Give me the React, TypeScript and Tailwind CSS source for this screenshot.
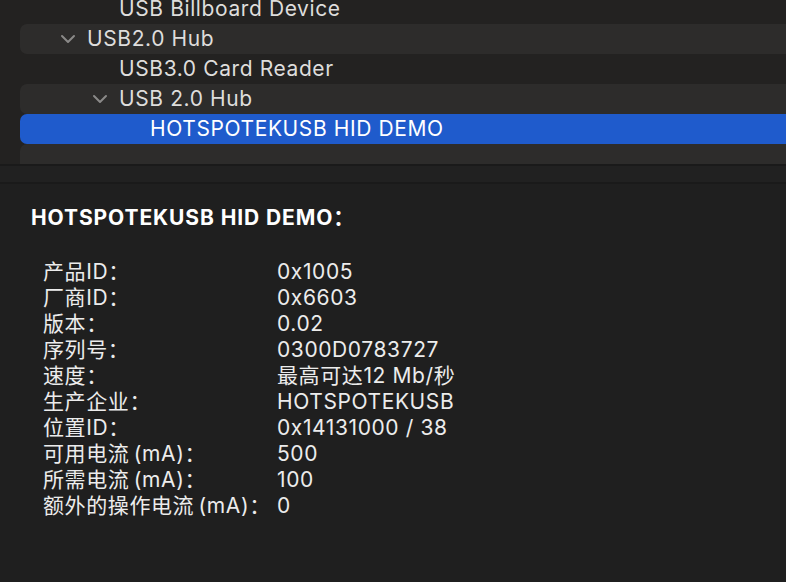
import React from "react";

type TreeRow = {
  label: string;
  pad: string;
  chevron?: boolean;
  shaded?: boolean;
  selected?: boolean;
};

const rows: TreeRow[] = [
  { label: "USB Billboard Device", pad: "pl-[99px]" },
  { label: "USB2.0 Hub", pad: "pl-[40px]", chevron: true, shaded: true },
  { label: "USB3.0 Card Reader", pad: "pl-[99px]" },
  { label: "USB 2.0 Hub", pad: "pl-[72px]", chevron: true, shaded: true },
  { label: "HOTSPOTEKUSB HID DEMO", pad: "pl-[130px]", selected: true },
  { label: "", pad: "pl-[99px]", shaded: true },
];

const details: [string, string][] = [
  ["产品ID：", "0x1005"],
  ["厂商ID：", "0x6603"],
  ["版本：", "0.02"],
  ["序列号：", "0300D0783727"],
  ["速度：", "最高可达12 Mb/秒"],
  ["生产企业：", "HOTSPOTEKUSB"],
  ["位置ID：", "0x14131000 / 38"],
  ["可用电流\u2009(mA)：", "500"],
  ["所需电流\u2009(mA)：", "100"],
  ["额外的操作电流\u2009(mA)：", "0"],
];

const Chevron = () => (
  <svg width="16" height="10" viewBox="0 0 16 10" className="mr-[11px] shrink-0">
    <path
      d="M2 2 L8 8 L14 2"
      fill="none"
      stroke="#8a8988"
      strokeWidth="2"
      strokeLinecap="round"
      strokeLinejoin="round"
    />
  </svg>
);

export default function App() {
  return (
    <div
      className="w-[786px] h-[582px] flex flex-col overflow-hidden bg-[#232221]"
      style={{ fontFamily: '"Inter", "Noto Sans CJK SC", sans-serif' }}
    >
      {/* device tree */}
      <div className="h-[164px] overflow-hidden">
        <div className="-mt-[6px] flex flex-col">
          {rows.map((r, i) => (
            <div
              key={i}
              className={`ml-[20px] h-[30px] flex items-center rounded-l-[7px] text-[21px] tracking-[0.6px] ${r.pad} ${
                r.selected
                  ? "bg-[#1f5bcc] text-white"
                  : r.shaded
                  ? "bg-[#2d2c2b] text-[#dedddc]"
                  : "text-[#dedddc]"
              }`}
            >
              {r.chevron && <Chevron />}
              <span>{r.label}</span>
            </div>
          ))}
        </div>
      </div>

      <div className="h-[2px] bg-[#1a1a1a]" />
      <div className="h-[16px] bg-[#212121]" />
      <div className="h-[2px] bg-[#1a1a1a]" />

      {/* details */}
      <div className="flex-1 bg-[#1f1f1f] pl-[31px] pt-[21px] text-[#ececec]">
        <h2 className="text-[21px] font-bold tracking-[0.9px] leading-[26px] text-white">
          HOTSPOTEKUSB HID DEMO：
        </h2>
        <div className="mt-[28px] pl-[12px] grid grid-cols-[234px_1fr] text-[21px] tracking-[0.6px] leading-[26px]">
          {details.map(([k, v]) => (
            <React.Fragment key={k}>
              <span className="whitespace-nowrap">{k}</span>
              <span>{v}</span>
            </React.Fragment>
          ))}
        </div>
      </div>
    </div>
  );
}
